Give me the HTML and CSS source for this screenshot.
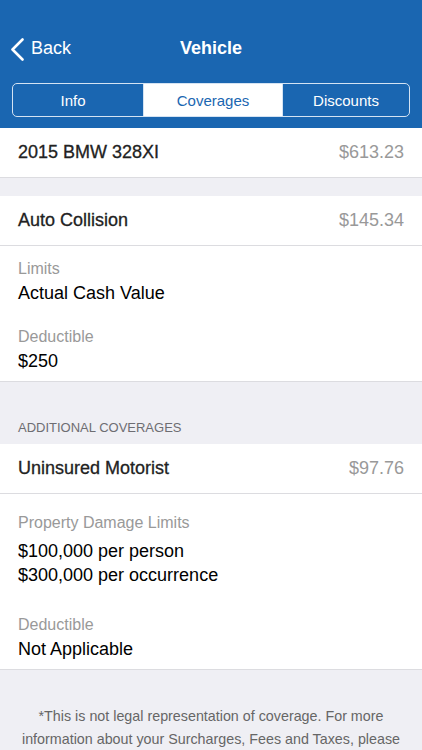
FILE: index.html
```html
<!DOCTYPE html>
<html lang="en">
<head>
    <meta charset="UTF-8">
    <meta name="viewport" content="width=device-width, initial-scale=1.0">
    <title>Vehicle</title>
    <link rel="stylesheet" href="styles.css">
</head>
<body>
    <!-- Header -->
    <div class="header">
        <div class="nav">
            <div class="back">
                <svg class="chevron" width="14" height="23" viewBox="0 0 14 23">
                    <path d="M12.5 1.5 L2.5 11.5 L12.5 21.5" fill="none" stroke="#fff" stroke-width="2.6" stroke-linecap="round" stroke-linejoin="round"/>
                </svg>
                <span>Back</span>
            </div>
            <div class="title">Vehicle</div>
        </div>
        <div class="segments">
            <div class="segment first">Info</div>
            <div class="segment active">Coverages</div>
            <div class="segment">Discounts</div>
        </div>
    </div>

    <!-- Vehicle total -->
    <div class="row">
        <span class="row-title">2015 BMW 328XI</span>
        <span class="price">$613.23</span>
    </div>

    <div class="spacer"></div>

    <!-- Auto Collision -->
    <div class="row">
        <span class="row-title">Auto Collision</span>
        <span class="price">$145.34</span>
    </div>
    <div class="details">
        <div class="item">
            <div class="label">Limits</div>
            <div class="value">Actual Cash Value</div>
        </div>
        <div class="item">
            <div class="label">Deductible</div>
            <div class="value">$250</div>
        </div>
    </div>

    <div class="section-head">ADDITIONAL COVERAGES</div>

    <!-- Uninsured Motorist -->
    <div class="row">
        <span class="row-title">Uninsured Motorist</span>
        <span class="price">$97.76</span>
    </div>
    <div class="details details-loose">
        <div class="item">
            <div class="label">Property Damage Limits</div>
            <div class="value multi">$100,000 per person<br>$300,000 per occurrence</div>
        </div>
        <div class="item">
            <div class="label">Deductible</div>
            <div class="value">Not Applicable</div>
        </div>
    </div>

    <div class="footer">
        *This is not legal representation of coverage. For more information about your Surcharges, Fees and Taxes, please
    </div>
</body>
</html>
```

FILE: styles.css
```css
body {
    margin: 0;
    font-family: "Liberation Sans", Arial, sans-serif;
    background-color: #efeff4;
    overflow: hidden;
}
.header {
    background-color: #1a66b1;
    padding: 26px 12px 11px;
}
.nav {
    position: relative;
    height: 44px;
    display: flex;
    align-items: center;
    justify-content: center;
}
.back {
    position: absolute;
    left: -2px;
    top: 0;
    height: 44px;
    display: flex;
    align-items: center;
    color: #fff;
    font-size: 18px;
}
.chevron {
    margin-right: 7px;
    margin-top: 2px;
}
.title {
    color: #fff;
    font-size: 18px;
    font-weight: bold;
}
.segments {
    margin-top: 13px;
    display: flex;
    height: 34px;
    border: 1px solid #d4e3f3;
    border-radius: 5px;
    overflow: hidden;
    box-sizing: border-box;
}
.segment {
    display: flex;
    align-items: center;
    justify-content: center;
    color: #fff;
    font-size: 15px;
    flex: 0 0 130px;
    box-sizing: border-box;
}
.segment.first {
    padding-right: 10px;
}
.segment + .segment {
    border-left: 1px solid #d4e3f3;
}
.segment:last-child {
    flex: 1;
}
.segment.active {
    background-color: #fff;
    color: #1a66b1;
    flex-basis: 139px;
}
.row {
    display: flex;
    justify-content: space-between;
    align-items: center;
    height: 49px;
    padding: 0 18px;
    background-color: #fff;
    border-bottom: 1px solid #dcdce0;
}
.row-title {
    font-size: 18px;
    color: #222;
    -webkit-text-stroke: 0.3px #222;
}
.price {
    font-size: 18px;
    color: #999;
}
.spacer {
    height: 18px;
}
.details {
    background-color: #fff;
    padding: 11px 18px 8px;
    border-bottom: 1px solid #dcdce0;
}
.item + .item {
    margin-top: 20px;
}
.label {
    font-size: 16px;
    line-height: 24px;
    color: #999;
}
.value {
    font-size: 18px;
    line-height: 24px;
    color: #000;
}
.details-loose {
    padding-top: 17px;
}
.details-loose .item + .item {
    margin-top: 26px;
}
.value.multi {
    margin-top: 4px;
}
.section-head {
    padding: 36px 18px 6px;
    font-size: 13px;
    line-height: 20px;
    color: #6d6d72;
}
.footer {
    padding: 35px 16px 0;
    text-align: center;
    font-size: 14.3px;
    line-height: 23px;
    color: #666;
}
```
